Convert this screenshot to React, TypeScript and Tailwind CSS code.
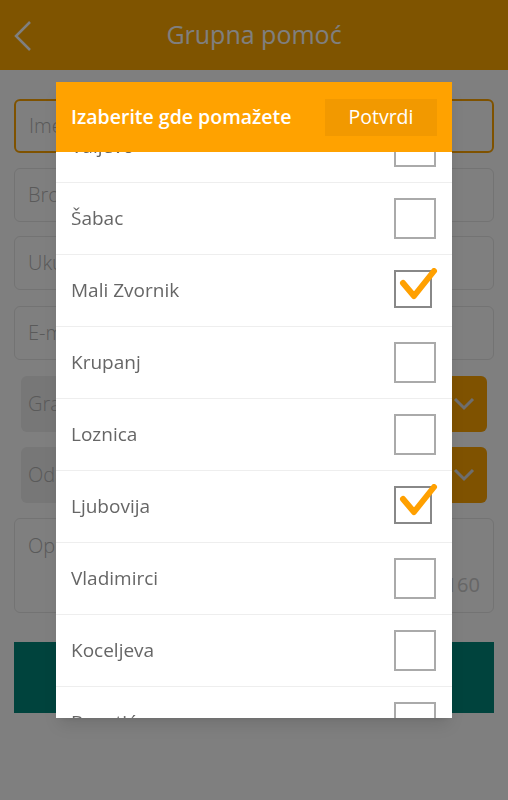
import { useState } from 'react'

const font = { fontFamily: '"Open Sans", "Noto Sans", sans-serif' }

type Place = { name: string; checked: boolean }

const initial: Place[] = [
  { name: 'Valjevo', checked: false },
  { name: 'Šabac', checked: false },
  { name: 'Mali Zvornik', checked: true },
  { name: 'Krupanj', checked: false },
  { name: 'Loznica', checked: false },
  { name: 'Ljubovija', checked: true },
  { name: 'Vladimirci', checked: false },
  { name: 'Koceljeva', checked: false },
  { name: 'Bogatić', checked: false },
]

function Field({ label, active }: { label: string; active?: boolean }) {
  return (
    <div
      className={
        'h-[54px] rounded-md flex items-center px-[13px] text-[20px] font-light text-[#b4b4b4] ' +
        (active ? 'border-2 border-[#ffa500]' : 'border border-[#e6e6e6]')
      }
    >
      {label}
    </div>
  )
}

function Select({ label }: { label: string }) {
  return (
    <div className="mx-[7px] h-[56px] rounded-md bg-[#eeeeee] flex items-center overflow-hidden">
      <span className="flex-1 pl-[7px] text-[20px] font-light text-[#b4b4b4]">{label}</span>
      <div className="w-[46px] h-full bg-[#ffa500] flex items-center justify-center">
        <svg width="22" height="14" viewBox="0 0 22 14" fill="none">
          <polyline points="2,2 11,11 20,2" stroke="#dddddd" strokeWidth="3" />
        </svg>
      </div>
    </div>
  )
}

function Checkbox({ checked }: { checked: boolean }) {
  if (checked) {
    return (
      <div className="relative w-[42px] h-[41px]">
        <div className="w-[38px] h-[38px] border-2 border-[#888888]" />
        <svg className="absolute left-0 -top-[2px]" width="46" height="42" viewBox="0 0 46 42" fill="none">
          <polyline
            points="9,15 20,28 40,3"
            stroke="#ffa000"
            strokeWidth="6"
            strokeLinecap="round"
            strokeLinejoin="round"
          />
        </svg>
      </div>
    )
  }
  return <div className="w-[42px] h-[41px] border-2 border-[#aaaaaa]" />
}

export default function App() {
  const [places, setPlaces] = useState<Place[]>(initial)

  const toggle = (name: string) => {
    setPlaces(places.map(p => (p.name == name ? { ...p, checked: !p.checked } : p)))
  }

  return (
    <div className="relative h-[800px] bg-white overflow-hidden" style={font}>
      <div className="h-[70px] bg-[#ffa800] flex items-center relative">
        <svg className="absolute left-[13px] top-[21px]" width="20" height="30" viewBox="0 0 20 30" fill="none">
          <polyline points="17,1 3,15 17,29" stroke="#ffffff" strokeWidth="2.5" />
        </svg>
        <h1 className="w-full text-center text-[25px] text-white">Grupna pomoć</h1>
      </div>

      <div className="px-[14px] pt-[29px] flex flex-col">
        <Field label="Ime i prezime" active />
        <div className="mt-[15px]">
          <Field label="Broj telefona" />
        </div>
        <div className="mt-[14px]">
          <Field label="Ukupan broj osoba" />
        </div>
        <div className="mt-[16px]">
          <Field label="E-mail adresa" />
        </div>
        <div className="mt-[16px]">
          <Select label="Grad" />
        </div>
        <div className="mt-[15px]">
          <Select label="Odaberite vrstu pomoći" />
        </div>
        <div className="mt-[15px] h-[95px] rounded-md border border-[#e6e6e6] px-[13px] pt-[12px] flex flex-col">
          <span className="text-[20px] font-light text-[#b4b4b4]">Opis</span>
          <span className="mt-auto mb-[12px] self-end text-[20px] text-[#cccccc]">160</span>
        </div>
        <button className="mt-[29px] h-[71px] bg-[#00877b] text-white text-[20px]">Pošalji</button>
      </div>

      <div className="fixed inset-0 bg-black/50" />

      <div className="absolute left-[56px] top-[82px] w-[396px] h-[636px] bg-white shadow-lg flex flex-col overflow-hidden">
        <div className="h-[70px] shrink-0 bg-[#ffa200] flex items-center justify-between pl-[15px] pr-[15px] relative z-10">
          <span className="text-[19.5px] font-semibold text-white">Izaberite gde pomažete</span>
          <button className="w-[112px] h-[37px] bg-[#f29900] text-white text-[19.5px]">Potvrdi</button>
        </div>
        <div className="flex-1 overflow-hidden">
          <ul className="-mt-[41px]">
            {places.map(p => (
              <li
                key={p.name}
                onClick={() => toggle(p.name)}
                className="h-[72px] border-b border-[#eeeeee] flex items-center justify-between pl-[15px] pr-[16px]"
              >
                <span className="text-[19px] text-[#666666]">{p.name}</span>
                <Checkbox checked={p.checked} />
              </li>
            ))}
          </ul>
        </div>
      </div>
    </div>
  )
}
